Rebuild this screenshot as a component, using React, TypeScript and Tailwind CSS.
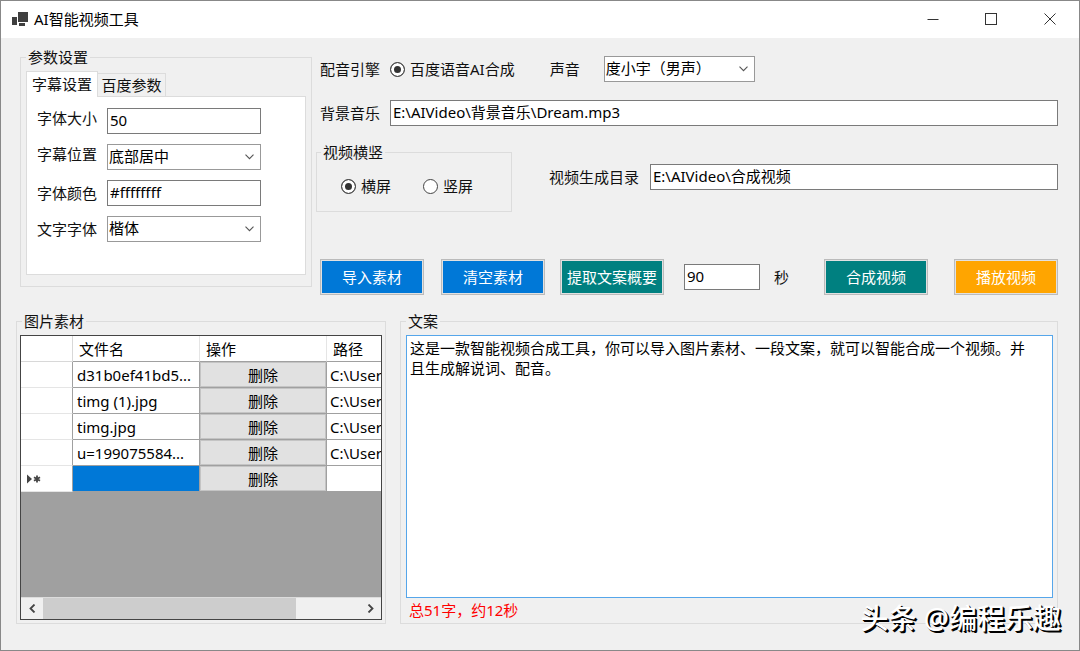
import React, {useState} from 'react';

const files = ["d31b0ef41bd5...", "timg (1).jpg", "timg.jpg", "u=199075584..."];

function Chevron({className}: {className: string}) {
  return (
    <svg className={className} viewBox="0 0 9 6" fill="none" stroke="#555" strokeWidth="1.1">
      <path d="M0.5 0.7 L4.5 4.7 L8.5 0.7" />
    </svg>
  );
}

function TextBox({id, value, className}: {id: string, value: string, className: string}) {
  return (
    <input id={id} type="text" defaultValue={value} className={`h-[26px] min-w-0 border border-[#7a7a7a] bg-white px-0.5 pb-[3px] text-black outline-none ${className}`} />
  );
}

function Combo({id, options, className}: {id: string, options: string[], className: string}) {
  return (
    <div className={`relative ${className}`}>
      <select id={id} className="block h-[26px] w-full appearance-none border border-[#999] bg-white pb-0.5 pl-px pr-5 text-black outline-none">
        {options.map((o) => <option key={o}>{o}</option>)}
      </select>
      <Chevron className="pointer-events-none absolute right-[7px] top-[10px] h-[6px] w-[9px]" />
    </div>
  );
}

function Radio({name, label, checked, onChange}: {name: string, label: string, checked: boolean, onChange: () => void}) {
  return (
    <label className="flex items-center gap-[5px]">
      <input
        type="radio"
        name={name}
        checked={checked}
        onChange={onChange}
        className="size-[15px] appearance-none rounded-full border border-[#444] bg-white checked:bg-[#333] checked:shadow-[inset_0_0_0_3px_white]"
      />
      {label}
    </label>
  );
}

function ActionButton({label, className}: {label: string, className: string}) {
  return (
    <button className={`h-9 w-[104px] border border-[#bbbbbb] text-white shadow-[inset_0_0_0_1px_#e1e1e1] ${className}`}>
      {label}
    </button>
  );
}

function TitleBar() {
  return (
    <header className="flex h-[37px] items-center bg-white pb-0.5 pl-[11px] text-black">
      <svg className="mr-1.5 h-4 w-4" viewBox="0 0 16 16" fill="#3f3f3f">
        <rect x="0" y="6" width="5" height="8" />
        <rect x="6" y="1" width="10" height="10" />
        <rect x="7" y="12" width="6" height="3" />
      </svg>
      <h1 className="flex-1">AI智能视频工具</h1>
      <button aria-label="最小化" className="flex h-full w-[59px] items-center justify-center">
        <svg className="h-3 w-3" viewBox="0 0 12 12" stroke="#333"><path d="M0.5 6.5 H11.5" /></svg>
      </button>
      <button aria-label="最大化" className="flex h-full w-[58px] items-center justify-center">
        <svg className="h-3 w-3" viewBox="0 0 12 12" fill="none" stroke="#333"><rect x="0.5" y="0.5" width="11" height="11" /></svg>
      </button>
      <button aria-label="关闭" className="flex h-full w-[59px] items-center justify-center">
        <svg className="h-3 w-3" viewBox="0 0 12 12" stroke="#333"><path d="M0.5 0.5 L11.5 11.5 M11.5 0.5 L0.5 11.5" /></svg>
      </button>
    </header>
  );
}

function ParamSettings() {
  const [tab, setTab] = useState("字幕设置");

  return (
    <fieldset className="w-[292px] shrink-0 self-start border border-[#dcdcdc] px-[5px] pb-[11px]">
      <legend className="px-0.5">参数设置</legend>
      <div role="tablist" className="relative z-10 -mb-px mt-1 flex items-end">
        {["字幕设置", "百度参数"].map((t) => (
          <button
            key={t}
            role="tab"
            aria-selected={tab === t}
            onClick={() => setTab(t)}
            className={t === tab ? "h-[26px] w-[72px] border border-b-0 border-[#dcdcdc] bg-white pb-0.5" : "h-6 w-[68px] border border-l-0 border-[#dcdcdc] bg-[#f0f0f0]"}
          >
            {t}
          </button>
        ))}
      </div>
      <div className="grid h-[179px] grid-cols-[70px_154px] content-start items-center gap-y-2.5 border border-[#dcdcdc] bg-white pl-[10px] pt-[11px]">
        <label htmlFor="size" className="self-start">字体大小</label>
        <TextBox id="size" value="50" className="w-full" />
        <label htmlFor="pos" className="self-start">字幕位置</label>
        <Combo id="pos" options={["底部居中"]} className="w-full" />
        <label htmlFor="color">字体颜色</label>
        <TextBox id="color" value="#ffffffff" className="w-full" />
        <label htmlFor="font">文字字体</label>
        <Combo id="font" options={["楷体"]} className="w-full" />
      </div>
    </fieldset>
  );
}

function OutputSettings() {
  const [dir, setDir] = useState("横屏");

  return (
    <div className="flex min-w-0 flex-1 flex-col pt-[9px]">
      <div className="flex items-center">
        <span className="w-[70px]">配音引擎</span>
        <Radio name="engine" label="百度语音AI合成" checked={true} onChange={() => {}} />
        <label htmlFor="voice" className="ml-[35px] w-[54px]">声音</label>
        <Combo id="voice" options={["度小宇（男声）"]} className="w-[151px]" />
      </div>
      <div className="mt-[18px] flex items-center">
        <label htmlFor="music" className="w-[70px]">背景音乐</label>
        <TextBox id="music" value="E:\AIVideo\背景音乐\Dream.mp3" className="flex-1" />
      </div>
      <div className="mt-4 flex items-start">
        <fieldset className="-ml-1 h-[70px] w-[196px] border border-[#dcdcdc] px-6">
          <legend className="-ml-5 px-0.5">视频横竖</legend>
          <div className="mt-3.5 flex gap-8">
            <Radio name="dir" label="横屏" checked={dir === "横屏"} onChange={() => setDir("横屏")} />
            <Radio name="dir" label="竖屏" checked={dir === "竖屏"} onChange={() => setDir("竖屏")} />
          </div>
        </fieldset>
        <div className="ml-[37px] mt-[22px] flex flex-1 items-center">
          <label htmlFor="out" className="w-[101px]">视频生成目录</label>
          <TextBox id="out" value="E:\AIVideo\合成视频" className="flex-1" />
        </div>
      </div>
      <div className="mt-[47px] flex items-center">
        <ActionButton label="导入素材" className="bg-[#0078d7]" />
        <ActionButton label="清空素材" className="ml-[17px] bg-[#0078d7]" />
        <ActionButton label="提取文案概要" className="ml-[15px] bg-[#008080]" />
        <TextBox id="seconds" value="90" className="ml-5 w-[76px]" />
        <label htmlFor="seconds" className="ml-3.5">秒</label>
        <ActionButton label="合成视频" className="ml-auto bg-[#008080]" />
        <ActionButton label="播放视频" className="ml-[26px] bg-[#ffa500]" />
      </div>
    </div>
  );
}

function ImageList() {
  return (
    <fieldset className="flex w-[370px] min-w-0 shrink-0 flex-col border border-[#dcdcdc] px-[3px] pb-[3px]">
      <legend className="ml-0.5 px-0.5">图片素材</legend>
      <div className="mt-1 flex h-[285px] flex-col overflow-hidden border border-[#444] bg-[#a0a0a0]">
        <div className="flex-1 overflow-hidden">
          <table className="w-[433px] table-fixed border-separate border-spacing-0 bg-white text-black">
            <thead>
              <tr className="h-[26px] text-left">
                <th className="w-[52px] border-b border-r border-[#d8d8d8] p-0"></th>
                <th className="w-[127px] border-b border-r border-b-[#a0a0a0] border-r-[#e5e5e5] py-0 pl-1.5 font-normal">文件名</th>
                <th className="w-[127px] border-b border-r border-b-[#a0a0a0] border-r-[#e5e5e5] py-0 pl-1.5 font-normal">操作</th>
                <th className="w-[127px] border-b border-b-[#a0a0a0] py-0 pl-1.5 font-normal">路径</th>
              </tr>
            </thead>
            <tbody>
              {[...files, ""].map((f, i) => (
                <tr key={i} className="h-[26px]">
                  <td className="border-b border-r border-b-[#e5e5e5] border-r-[#a0a0a0] p-0">
                    {!f && (
                      <svg className="ml-1.5 h-[10px] w-[14px]" viewBox="0 0 14 10" fill="#444" stroke="#444">
                        <path d="M0 0.5 L5 5 L0 9.5 Z" stroke="none" />
                        <path d="M10 1.5 V8.5 M7 3.2 L13 6.8 M13 3.2 L7 6.8" strokeWidth="1.8" />
                      </svg>
                    )}
                  </td>
                  <td className={f ? "truncate border-b border-r border-[#a0a0a0] py-0 pl-1" : "border-b border-r border-[#a0a0a0] bg-[#0078d7] p-0"}>{f}</td>
                  <td className="border-b border-r border-[#a0a0a0] p-0">
                    <button className="block h-[25px] w-full border border-[#c4c4c4] bg-[#e1e1e1]">删除</button>
                  </td>
                  <td className="border-b border-[#a0a0a0] py-0 pl-[3px]">{f && "C:\\User"}</td>
                </tr>
              ))}
            </tbody>
          </table>
        </div>
        <div className="flex h-[22px] items-center border-t border-[#dcdcdc] bg-[#f0f0f0]">
          <button aria-label="向左滚动" className="flex h-full w-[22px] items-center justify-center">
            <svg className="h-[9px] w-[7px]" viewBox="0 0 7 9" fill="none" stroke="#444" strokeWidth="1.8"><path d="M5.5 0.5 L1.5 4.5 L5.5 8.5" /></svg>
          </button>
          <div className="h-full flex-1">
            <div className="h-full w-4/5 bg-[#cdcdcd]"></div>
          </div>
          <button aria-label="向右滚动" className="flex h-full w-[22px] items-center justify-center">
            <svg className="h-[9px] w-[7px]" viewBox="0 0 7 9" fill="none" stroke="#444" strokeWidth="1.8"><path d="M1.5 0.5 L5.5 4.5 L1.5 8.5" /></svg>
          </button>
        </div>
      </div>
    </fieldset>
  );
}

function Copywriting() {
  return (
    <fieldset className="flex min-w-0 flex-1 flex-col border border-[#dcdcdc] pl-[5px] pr-1">
      <legend className="px-0.5">文案</legend>
      <textarea
        aria-label="文案"
        defaultValue="这是一款智能视频合成工具，你可以导入图片素材、一段文案，就可以智能合成一个视频。并且生成解说词、配音。"
        className="mt-1 block h-[263px] w-full resize-none border border-[#56a6ea] bg-white pl-[3px] pr-5 pt-0.5 leading-5 text-black outline-none"
      />
      <p className="mt-0.5 px-[3px] text-[#ff0000]">总51字，约12秒</p>
    </fieldset>
  );
}

export default function App() {
  return (
    <div className="relative flex min-h-screen flex-col border border-[#888] bg-[#f0f0f0] font-['Noto_Sans','Noto_Sans_CJK_SC',sans-serif] text-[15px] leading-5 text-[#111]">
      <TitleBar />
      <main className="flex flex-1 flex-col pb-[26px] pt-[9px]">
        <section className="flex gap-2 pl-[19px] pr-[21px]">
          <ParamSettings />
          <OutputSettings />
        </section>
        <section className="mt-4 flex flex-1 gap-[14px] pl-[15px] pr-[21px]">
          <ImageList />
          <Copywriting />
        </section>
      </main>
      <div className="absolute bottom-3 right-[18px] text-[28px] font-medium leading-10 text-white [text-shadow:1px_1px_0_#000,2px_2px_0_#000]">头条 @编程乐趣</div>
    </div>
  );
}
